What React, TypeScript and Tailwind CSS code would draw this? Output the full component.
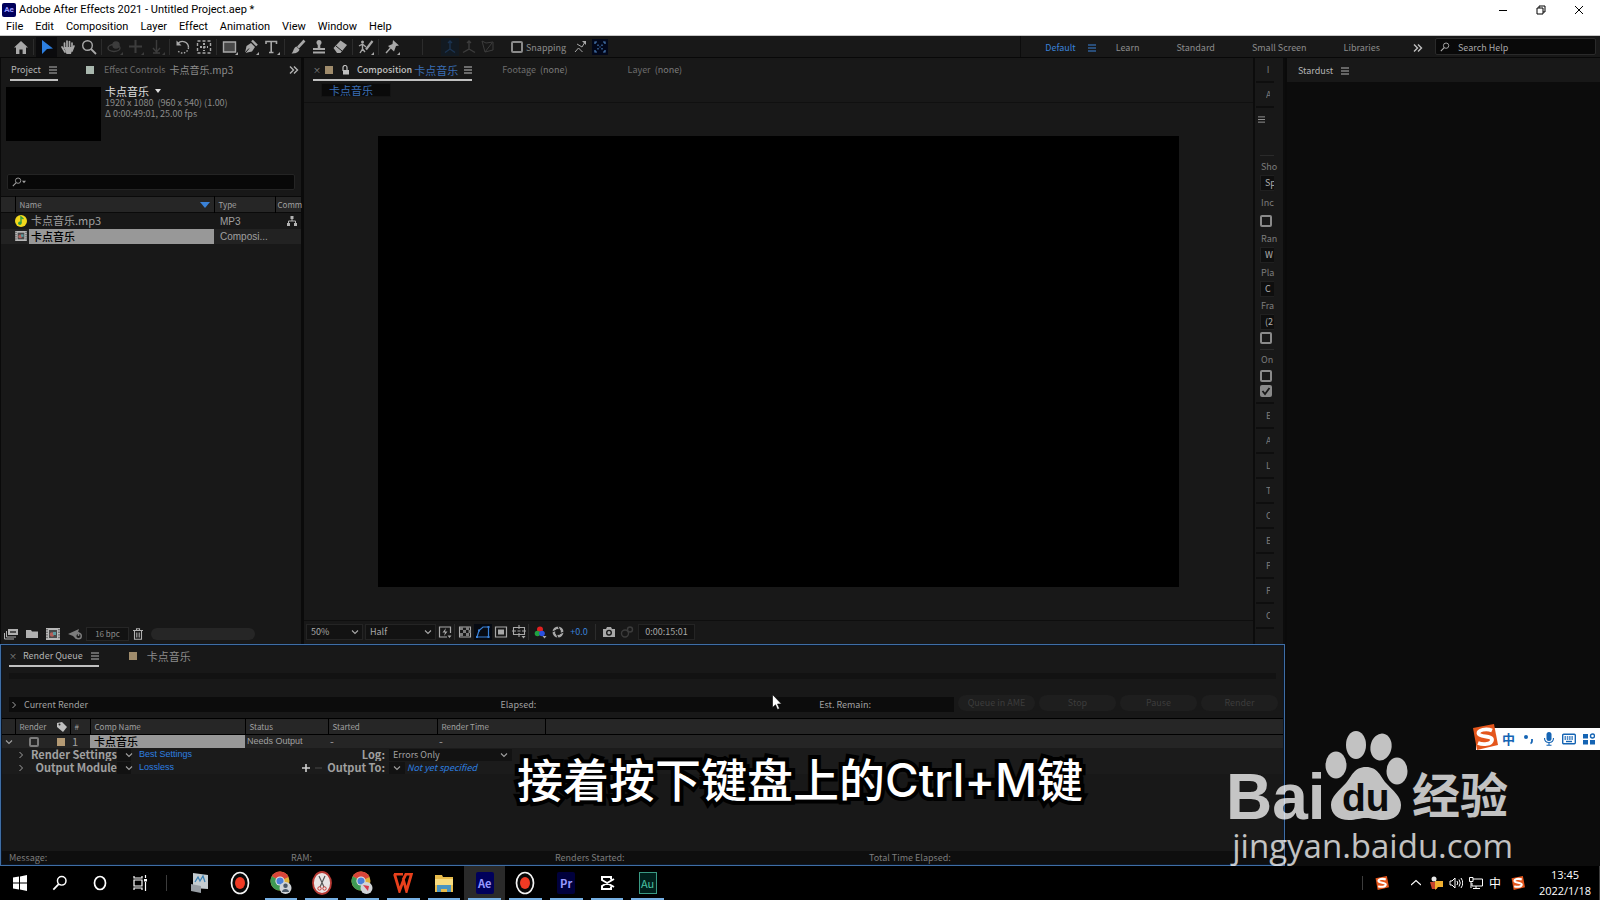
import type { ReactNode } from "react";

interface IconProps {
  children: ReactNode;
  className?: string;
  box?: string;
}

// Shared wrapper for the line icons, strokes use the text color
function Icon({ children, className = "w-4 h-4", box = "0 0 16 16" }: IconProps) {
  return (
    <svg
      viewBox={box}
      className={`shrink-0 ${className}`}
      fill="none"
      stroke="currentColor"
      strokeWidth="1.4"
      aria-hidden="true"
    >
      {children}
    </svg>
  );
}

function Corner() {
  return <path d="M16 13v3h-3z" fill="currentColor" stroke="none" />;
}

function Burger({ className = "w-2 h-2" }: { className?: string }) {
  return (
    <Icon className={className} box="0 0 8 8">
      <path d="M0 1h8M0 4h8M0 7h8" strokeWidth="1" />
    </Icon>
  );
}

function Chevron({ className = "w-2 h-2" }: { className?: string }) {
  return (
    <Icon className={className} box="0 0 8 8">
      <path d="M1 2.5l3 3 3-3" strokeWidth="1.1" />
    </Icon>
  );
}

interface ToolButtonProps {
  label: string;
  active?: boolean;
  dim?: boolean;
  children: ReactNode;
}

function ToolButton({ label, active, dim, children }: ToolButtonProps) {
  return (
    <button
      aria-label={label}
      className={`flex h-5 w-[21px] items-center justify-center ${
        active ? "bg-[#0b0b0d] text-[#2d7fe0]" : dim ? "text-[#3c3c3c]" : "text-[#a8a8a8]"
      }`}
    >
      <Icon>{children}</Icon>
    </button>
  );
}

function Separator() {
  return <span className="mx-0.5 h-4 w-px bg-[#2c2c2c]" />;
}

function CheckBox({ label, checked }: { label: string; checked?: boolean }) {
  return (
    <input
      type="checkbox"
      aria-label={label}
      defaultChecked={checked}
      className="block h-3 w-3 shrink-0 appearance-none rounded-xs border-2 border-[#8a8a8a]"
    />
  );
}

function SearchGlyph({ className = "w-3 h-3" }: { className?: string }) {
  return (
    <Icon className={className} box="0 0 12 12">
      <circle cx="7.3" cy="4.4" r="3.2" strokeWidth="1.1" />
      <path d="M5 6.8L1 11" strokeWidth="1.3" />
    </Icon>
  );
}

function CompIcon({ className = "w-3.5 h-3" }: { className?: string }) {
  return (
    <svg viewBox="0 0 14 12" className={`shrink-0 ${className}`} aria-hidden="true">
      <path d="M0 0h14v12H0z" fill="#b8b8b8" />
      <path d="M1 1v10M13 1v10" stroke="#333" strokeDasharray="1.4 1.2" />
      <path d="M3 2h8v8H3z" fill="#4a4a4a" />
      <circle cx="6" cy="6.5" r="2.2" fill="#b4605a" />
      <path d="M7 4h3v3H7z" fill="#5b9aa0" />
    </svg>
  );
}

const menus = ["File", "Edit", "Composition", "Layer", "Effect", "Animation", "View", "Window", "Help"];

function TitleBar() {
  return (
    <header className="border-b border-[#c8c8c8] bg-white font-['Roboto',sans-serif] text-black">
      <div className="flex h-[18px] items-center pt-0.5 pr-3 pl-0.5">
        <span className="flex h-3.5 w-3.5 items-center justify-center rounded-xs bg-[#00005b] text-[8px] font-bold text-[#9999ff]">Ae</span>
        <h1 className="ml-[3px] flex-1 text-[11px] leading-4">Adobe After Effects 2021 - Untitled Project.aep *</h1>
        <div className="flex items-center gap-7">
          <button aria-label="Minimize">
            <Icon className="h-2.5 w-2.5" box="0 0 10 10"><path d="M1 5.5h8" strokeWidth="1" /></Icon>
          </button>
          <button aria-label="Restore">
            <Icon className="h-2.5 w-2.5" box="0 0 10 10"><path d="M1 3h6v6H1zM3 3V1h6v6H7" strokeWidth="1" /></Icon>
          </button>
          <button aria-label="Close" className="mr-1">
            <Icon className="h-2.5 w-2.5" box="0 0 10 10"><path d="M1 1l8 8M9 1l-8 8" strokeWidth="1" /></Icon>
          </button>
        </div>
      </div>
      <nav className="flex h-[17px] items-center gap-3 pl-1.5">
        {menus.map((m) => (
          <button key={m} className="text-[11px] leading-4">{m}</button>
        ))}
      </nav>
    </header>
  );
}

function Toolbar() {
  return (
    <div className="flex h-[22px] items-center border-b border-[#080808] bg-[#181818] pl-2.5 text-[9px] text-[#8c8c8c]">
      <ToolButton label="Home">
        <path d="M1 8.5L8 2l7 6.5h-2V15H9.6v-4.5H6.4V15H3V8.5z" fill="currentColor" stroke="none" />
      </ToolButton>
      <Separator />
      <ToolButton label="Selection" active>
        <path d="M3 1l11 8.5-6 .5-5 5z" fill="currentColor" stroke="none" />
      </ToolButton>
      <ToolButton label="Hand">
        <path d="M4.5 9V4M7 8V2M9.5 8V2.5M12 9V4M2 8l3 5M14 7l-2 5" strokeWidth="1.7" strokeLinecap="round" />
        <path d="M4 8h8.8L11 15H6.5z" fill="currentColor" stroke="none" />
      </ToolButton>
      <ToolButton label="Zoom">
        <circle cx="6.5" cy="6.5" r="4.8" />
        <path d="M10 10l5 5" strokeWidth="1.8" />
      </ToolButton>
      <Separator />
      <ToolButton label="Orbit camera" dim>
        <ellipse cx="7" cy="9" rx="6" ry="3.5" />
        <circle cx="9" cy="6" r="3" fill="currentColor" />
        <Corner />
      </ToolButton>
      <ToolButton label="Pan camera" dim>
        <path d="M7.5 1v13M1 7.5h13" strokeWidth="2" />
        <Corner />
      </ToolButton>
      <ToolButton label="Dolly camera" dim>
        <path d="M7.5 1v11M4 9l3.5 4L11 9M4 14h7" />
        <Corner />
      </ToolButton>
      <Separator />
      <ToolButton label="Rotate">
        <path d="M3 4.5a6 6 0 0 1 10.5 4" />
        <path d="M13.5 8.5A6 6 0 0 1 3 12" strokeDasharray="1.5 1.5" />
        <path d="M1.5 1.5v5h5z" fill="currentColor" stroke="none" />
      </ToolButton>
      <ToolButton label="Anchor point">
        <path d="M1.5 2h13v12h-13z" strokeDasharray="3 2" />
        <path d="M8 4v8M4 8h8" strokeDasharray="2 1.5" strokeWidth="2" />
      </ToolButton>
      <Separator />
      <ToolButton label="Rectangle">
        <path d="M1.5 3h12v10h-12z" fill="#484848" />
        <Corner />
      </ToolButton>
      <ToolButton label="Pen">
        <path d="M2 14l1.5-7L8 4l4 4-3 4.5z" fill="currentColor" stroke="none" />
        <path d="M9 1.5l5 5" strokeWidth="2.4" />
        <path d="M2 14l4-4.5" stroke="#181818" strokeWidth="1" />
        <Corner />
      </ToolButton>
      <ToolButton label="Type">
        <path d="M2 5V2.5h10.5V5M7.2 2.5v11M5 13.5h4.5" strokeWidth="1.6" />
        <Corner />
      </ToolButton>
      <Separator />
      <ToolButton label="Brush">
        <path d="M14.5 1.5L8 8.5" strokeWidth="2.6" />
        <path d="M6.5 7.5l3 3c-1 3.5-4.5 4-8 4 2-1.5 2-6 5-7z" fill="currentColor" stroke="none" />
      </ToolButton>
      <ToolButton label="Clone stamp">
        <path d="M8 2v8" strokeWidth="2.6" />
        <circle cx="8" cy="3.5" r="2.5" fill="currentColor" stroke="none" />
        <path d="M2 10h12M2 13.5h12" strokeWidth="2" />
      </ToolButton>
      <ToolButton label="Eraser">
        <path d="M1.5 9l7-7.5L15 6l-6.5 8H5z" fill="currentColor" stroke="none" />
        <path d="M4 7l6 5" stroke="#181818" strokeWidth="1" />
      </ToolButton>
      <Separator />
      <ToolButton label="Roto brush">
        <circle cx="4.5" cy="3" r="1.5" fill="currentColor" stroke="none" />
        <path d="M1 7l3.5-2L8 8M4.5 5v5L2 14M4.5 10L7 13" />
        <path d="M14.5 2L8 10.5" strokeWidth="2.2" />
        <Corner />
      </ToolButton>
      <Separator />
      <ToolButton label="Puppet pin">
        <path d="M9 1l6 5.5-3 .5-2 5.5L4 7l4.5-2z" fill="currentColor" stroke="none" />
        <path d="M6.5 9L2 14" />
        <Corner />
      </ToolButton>
      <span className="ml-5 h-4 w-px bg-[#2c2c2c]" />
      <div className="ml-[18px] flex gap-px">
        <button aria-label="Local axis" className="bg-[#121a22] p-px text-[#1b3350]">
          <Icon><path d="M8 2v8l-5 3.5M8 10l5 3.5M6 4l2-2 2 2" /></Icon>
        </button>
        <button aria-label="World axis" className="p-px text-[#3c3c3c]">
          <Icon><path d="M8 2v8l-6 3.5M8 10l6 3.5M6 4l2-2 2 2" /></Icon>
        </button>
        <button aria-label="View axis" className="p-px text-[#3c3c3c]">
          <Icon><path d="M2 2l4 2 7-1v8l-8 2zM5 13l7-9" strokeWidth="1" /></Icon>
        </button>
      </div>
      <span className="ml-1"><Separator /></span>
      <label className="ml-1.5 flex items-center gap-[3px]">
        <CheckBox label="Snapping" />
        <span className="pt-0.5 leading-3">Snapping</span>
      </label>
      <button aria-label="Snap edges" className="ml-2 text-[#a8a8a8]">
        <Icon className="h-3 w-3" box="0 0 12 12">
          <path d="M1 11l3.5-4 4 4M3 3l5 3 3-5" strokeWidth="1" />
          <path d="M8 0h4v4z" fill="currentColor" stroke="none" />
        </Icon>
      </button>
      <button aria-label="Snap grid" className="ml-1.5 flex h-4 w-4 items-center justify-center bg-[#02071a] text-[#4a7db8]">
        <Icon className="h-3 w-3" box="0 0 12 12">
          <path d="M1 3V1h2M9 1h2v2M11 9v2H9M3 11H1V9M4 3.5V5M8 3.5V5M4 7v1.5M8 7v1.5M6 5.5v1" strokeWidth="1.2" />
        </Icon>
      </button>
      <div className="flex-1" />
      <nav className="flex h-full items-center border-l border-[#0c0c0c] pt-0.5 pl-6">
        <button className="text-[#3a82d8]">Default</button>
        <button aria-label="Workspace menu" className="ml-3 text-[#3a82d8]"><Burger /></button>
        <div className="ml-5 flex gap-[37px]">
          <button>Learn</button>
          <button>Standard</button>
          <button>Small Screen</button>
          <button>Libraries</button>
        </div>
        <button aria-label="More workspaces" className="mr-2 ml-[33px] text-[#c0c0c0]">
          <Icon className="h-2.5 w-2.5" box="0 0 10 10"><path d="M1 1.5L4.5 5 1 8.5M5 1.5L8.5 5 5 8.5" /></Icon>
        </button>
      </nav>
      <label className="mr-1 ml-1 flex h-[17px] w-[161px] items-center gap-2 rounded-xs border border-[#2a2a2a] bg-[#090909] pl-1 text-[#b0b0b0]">
        <SearchGlyph className="h-2.5 w-2.5" />
        <input aria-label="Search Help" placeholder="Search Help" className="w-24 bg-transparent pt-0.5 outline-none placeholder:text-[#a8a8a8]" />
      </label>
    </div>
  );
}

function ProjectPanel() {
  return (
    <section className="flex w-[302px] shrink-0 flex-col border-x border-[#0a0a0a] bg-[#181818]">
      <div className="flex h-[23px] items-center pl-[9px] text-[9px] text-[#6c6c6c]">
        <button className="flex h-full items-center gap-2 border-b-2 border-[#c0c0c0] px-px pt-0.5 text-[#b4b4b4]">
          Project <Burger />
        </button>
        <span className="ml-7 h-2 w-2 bg-[#a9b8ae]" />
        <button className="ml-2.5 flex items-center gap-1">
          Effect Controls <span className="text-[10px] text-[#8c8c8c]">卡点音乐.mp3</span>
        </button>
        <button aria-label="More tabs" className="mr-0.5 ml-auto text-[#b4b4b4]">
          <Icon className="h-2.5 w-2.5" box="0 0 10 10"><path d="M1 1.5L4.5 5 1 8.5M5 1.5L8.5 5 5 8.5" /></Icon>
        </button>
      </div>
      <div className="mt-1 flex gap-1 pl-[5px]">
        <div className="mt-0.5 h-[54px] w-[95px] bg-black" />
        <div className="text-[9px] leading-[11px] text-[#8c8c8c]">
          <button className="flex items-center gap-1.5 text-[11px] leading-3 text-[#e0e0e0]">
            卡点音乐
            <Icon className="h-1.5 w-1.5" box="0 0 6 6"><path d="M0 1h6L3 5z" fill="currentColor" stroke="none" /></Icon>
          </button>
          <p>1920 x 1080 &nbsp;(960 x 540) (1.00)</p>
          <p>Δ 0:00:49:01, 25.00 fps</p>
        </div>
      </div>
      <label className="mx-1.5 mt-[33px] flex h-4 items-center rounded-xs border border-[#242424] bg-[#080808] pl-1 text-[#a0a0a0]">
        <SearchGlyph className="h-2.5 w-2.5" />
        <Icon className="h-1 w-1" box="0 0 6 6"><path d="M0 1h6L3 5z" fill="currentColor" stroke="none" /></Icon>
        <input aria-label="Search project" className="w-60 bg-transparent text-[11px] outline-none" />
      </label>
      <table className="mt-1.5 w-full table-fixed border-collapse text-left text-[11px]">
        <thead>
          <tr className="h-4 border-y border-[#0a0a0a] bg-[#262626] text-[8px] leading-3 text-[#a0a0a0]">
            <th className="w-[14px]" />
            <th className="w-[199px] border-l border-black pr-1 pl-1 font-normal">
              <span className="flex items-center justify-between">
                Name
                <Icon className="h-1.5 w-2.5 text-[#3a82d8]" box="0 0 10 6"><path d="M0 0h10L5 6z" fill="currentColor" stroke="none" /></Icon>
              </span>
            </th>
            <th className="w-[61px] border-l border-black pl-1 font-normal">Type</th>
            <th className="border-l border-black pl-0.5 font-normal">Comm</th>
          </tr>
        </thead>
        <tbody className="text-[#a0a0a0]">
          <tr className="h-4">
            <td />
            <td>
              <span className="flex items-center gap-1 leading-[15px]">
                <Icon className="h-3 w-3" box="0 0 12 12">
                  <circle cx="6" cy="6" r="6" fill="#f2d81c" stroke="none" />
                  <path d="M6 8V2l2.5 2" stroke="#2f9a44" />
                  <circle cx="4.8" cy="8.3" r="1.7" fill="#2f9a44" stroke="none" />
                </Icon>
                卡点音乐.mp3
              </span>
            </td>
            <td className="pt-0.5 pl-1.5 font-['Liberation_Sans',sans-serif] text-[10px] leading-3">MP3</td>
            <td className="pl-3">
              <Icon className="h-2.5 w-2.5 text-[#b4b4b4]" box="0 0 10 10">
                <path d="M3.5 0h3v3h-3zM0 7h3v3H0zM7 7h3v3H7z" fill="currentColor" stroke="none" />
                <path d="M5 3v2M1.5 7V5h7v2" strokeWidth="1" />
              </Icon>
            </td>
          </tr>
          <tr className="h-[15px] bg-[#222]">
            <td />
            <td>
              <span className="flex items-center">
                <CompIcon className="h-2.5 w-3" />
                <span className="ml-0.5 flex-1 bg-[#989898] pl-0.5 leading-[15px] font-medium text-black">卡点音乐</span>
              </span>
            </td>
            <td className="pt-0.5 pl-1.5 font-['Liberation_Sans',sans-serif] text-[10px] leading-3">Composi...</td>
            <td />
          </tr>
        </tbody>
      </table>
      <div className="mt-auto flex h-5 items-center text-[#b0b0b0]">
        <button aria-label="Interpret footage" className="ml-[3px]">
          <Icon className="h-3 w-3.5" box="0 0 14 12">
            <path d="M4 1h10v6H4z" fill="currentColor" stroke="none" />
            <path d="M2.5 3v6H12M.5 5v6H10" strokeWidth="1" />
            <path d="M6 4h6" stroke="#222" />
          </Icon>
        </button>
        <button aria-label="New folder" className="ml-2">
          <Icon className="h-3 w-3" box="0 0 12 12"><path d="M0 2h5l1 1.5h6V10H0z" fill="currentColor" stroke="none" /></Icon>
        </button>
        <button aria-label="New composition" className="ml-2"><CompIcon /></button>
        <button aria-label="Project settings" className="ml-2 text-[#7c7c7c]">
          <Icon className="h-3 w-3.5" box="0 0 14 12">
            <path d="M0 6l11-5-3 10-3-3z" fill="currentColor" stroke="none" />
            <circle cx="10.5" cy="8" r="2.8" fill="#181818" />
            <path d="M10.5 4v4" />
          </Icon>
        </button>
        <button className="ml-1 h-3.5 w-[43px] border border-[#262626] bg-[#121212] text-[8px] leading-3 text-[#8c8c8c]">16 bpc</button>
        <button aria-label="Delete" className="ml-1">
          <Icon className="h-3 w-2.5" box="0 0 10 12">
            <path d="M0 2.5h10M3.5 2V.7h3V2M1.5 3v8.3h7V3M3.8 4.5v5M6.2 4.5v5" strokeWidth="1.1" />
          </Icon>
        </button>
        <span className="ml-2 h-3 w-[104px] rounded-full bg-[#262626]" />
      </div>
    </section>
  );
}

function FooterButton({ label, active, children }: { label: string; active?: boolean; children: ReactNode }) {
  return (
    <button aria-label={label} className={`flex h-4 w-[18px] items-center justify-center ${active ? "bg-[#060a12] text-[#3a82d8]" : ""}`}>
      <Icon className="h-3.5 w-3.5" box="0 0 14 14">{children}</Icon>
    </button>
  );
}

function CompositionPanel() {
  return (
    <section className="ml-0.5 flex min-w-0 flex-1 flex-col bg-[#181818]">
      <div className="flex h-[23px] items-center pl-[9px] text-[9px] text-[#6c6c6c]">
        <div className="flex h-full items-center border-b-2 border-[#c0c0c0] pt-0.5 text-[#c0c0c0]">
          <button aria-label="Close tab" className="w-1.5 text-[8px] text-[#8c8c8c]">×</button>
          <span className="ml-1.5 h-2 w-2 bg-[#a08c6c]" />
          <Icon className="ml-2 h-2.5 w-2.5" box="0 0 10 10">
            <path d="M2 5h6v4.5H2z" fill="currentColor" stroke="none" />
            <path d="M2 6V2.5a2 2 0 0 1 4 0V5" strokeWidth="1.2" />
          </Icon>
          <span className="ml-1.5 font-medium">Composition</span>
          <span className="ml-0.5 text-[11px] leading-4 text-[#3a6eb4]">卡点音乐</span>
          <button aria-label="Panel menu" className="ml-1.5"><Burger /></button>
        </div>
        <button className="ml-[30px]">Footage &nbsp;<span className="text-[#7c7c7c]">(none)</span></button>
        <button className="ml-[60px]">Layer &nbsp;<span className="text-[#7c7c7c]">(none)</span></button>
      </div>
      <div className="h-[22px] border-b border-[#101010] pt-0.5 pl-[17px]">
        <button className="block h-3.5 w-[70px] border border-[#141414] bg-[#0a0a0a] pr-2.5 text-[11px] leading-3 text-[#3a6eb4]">卡点音乐</button>
      </div>
      <div className="flex flex-1 items-center px-[74px]">
        <div className="aspect-video w-full bg-black" />
      </div>
      <div className="flex h-6 items-center border-t border-[#0e0e0e] pb-0.5 pl-0.5 text-[9px] text-[#a8a8a8]">
        <label className="relative">
          <select aria-label="Magnification" className="block h-4 w-[57px] appearance-none border border-[#242424] bg-[#121212] pl-1 leading-3">
            <option>50%</option>
          </select>
          <Chevron className="pointer-events-none absolute top-1 right-1 h-2 w-2" />
        </label>
        <label className="relative ml-0.5">
          <select aria-label="Resolution" className="block h-4 w-[71px] appearance-none border border-[#242424] bg-[#121212] pl-1 leading-3">
            <option>Half</option>
          </select>
          <Chevron className="pointer-events-none absolute top-1 right-1 h-2 w-2" />
        </label>
        <FooterButton label="Fast previews">
          <path d="M12.5 8V2h-11v10H9" strokeWidth="1.2" />
          <path d="M8 3L4.5 7.5H7L6 11l3.5-4.5H7zM9.5 10.5h4l-2 2.5z" fill="currentColor" stroke="none" />
        </FooterButton>
        <span className="mr-px h-4 w-px bg-[#2c2c2c]" />
        <FooterButton label="Transparency grid">
          <path d="M1.5 2h11v10h-11z" strokeWidth="1.1" />
          <path d="M2 2h3v3H2zM8 2h3v3H8zM5 5h3v3H5zM10.5 5h2v3h-2zM2 8h3v3H2zM8 8h3v3H8z" fill="#7c7c7c" stroke="none" />
        </FooterButton>
        <FooterButton label="Mask visibility" active>
          <path d="M1 12l2-6.5L7 2h5.500v10z" strokeWidth="1.2" />
          <path d="M0 11h2v2H0zM2 4.500h2v2H2zM11.500 1h2v2h-2zM11.500 11h2v2h-2z" fill="currentColor" stroke="none" />
        </FooterButton>
        <FooterButton label="Region of interest">
          <path d="M1.5 2h11v10h-11z" strokeWidth="1.2" />
          <path d="M4 4.5h6v5H4z" fill="currentColor" stroke="none" />
        </FooterButton>
        <FooterButton label="Guides">
          <path d="M1.5 2.5h11v7h-11zM7 0v4M7 8v4M0 6h4M10 6h4M5.5 6h3" strokeWidth="1.1" />
          <path d="M9.5 11h4l-2 2.5z" fill="currentColor" stroke="none" />
        </FooterButton>
        <span className="mr-0.5 h-4 w-px bg-[#2c2c2c]" />
        <FooterButton label="Channels">
          <circle cx="7" cy="4.5" r="3" fill="#e02020" stroke="none" />
          <circle cx="4.5" cy="8.5" r="2.8" fill="#20a040" stroke="none" />
          <circle cx="9" cy="8.5" r="2.8" fill="#2a50e0" stroke="none" />
          <path d="M9.5 11h4l-2 2.5z" fill="currentColor" stroke="none" />
        </FooterButton>
        <FooterButton label="Reset exposure">
          <circle cx="7" cy="7" r="4.2" strokeWidth="2.6" />
          <path d="M7 1l2 5M13 7l-5 2M7 13L5 8M1 7l5-2" stroke="#181818" strokeWidth="1" />
        </FooterButton>
        <button className="w-6 text-[#3a82d8]">+0.0</button>
        <span className="mx-1 h-4 w-px bg-[#2c2c2c]" />
        <FooterButton label="Snapshot">
          <path d="M1 4h3l1-2h4l1 2h3v8H1z" fill="currentColor" stroke="none" />
          <circle cx="7" cy="7.7" r="2.3" stroke="#181818" />
        </FooterButton>
        <span className="text-[#3c3c3c]">
          <FooterButton label="Show snapshot">
            <circle cx="5" cy="8.5" r="3.5" />
            <circle cx="10" cy="4.5" r="2.5" />
          </FooterButton>
        </span>
        <button className="ml-0.5 h-4 w-[57px] border border-[#242424] bg-[#121212] leading-3">0:00:15:01</button>
      </div>
    </section>
  );
}

// Collapsed panel title, only the first few pixels are visible
function Collapsed({ text }: { text: string }) {
  return (
    <button className="flex h-[25px] w-[18px] items-center border-b-2 border-[#0e0e0e] pl-2.5 text-[9px] text-[#7c7c7c]">
      <span className="w-1 overflow-hidden">{text}</span>
    </button>
  );
}

function SideField({ text }: { text: string }) {
  return (
    <div className="ml-1 flex h-4 items-center overflow-hidden border-y border-l border-[#202020] bg-[#0e0e0e] pl-1 text-[9px] leading-3 text-[#b0b0b0]">
      {text}
    </div>
  );
}

function SideLabel({ text }: { text: string }) {
  return <p className="pl-[5px] text-[9px] leading-4 text-[#7c7c7c]">{text}</p>;
}

function SideStrip() {
  return (
    <aside className="w-8 shrink-0 border-x-2 border-[#0c0c0c] bg-[#181818] pl-px">
      <div className="w-[18px]">
        <Collapsed text="I" />
        <Collapsed text="A" />
        <button aria-label="Preview menu" className="mt-2 ml-0.5 block text-[#a0a0a0]"><Burger className="h-[7px] w-[7px]" /></button>
        <hr className="mt-8 ml-1 border-[#2a2a2a]" />
        <div className="pt-[3px]"><SideLabel text="Sho" /></div>
        <SideField text="Sp" />
        <div className="pt-1"><SideLabel text="Inc" /></div>
        <div className="mt-1 ml-1"><CheckBox label="Include video" /></div>
        <div className="pt-1"><SideLabel text="Ran" /></div>
        <SideField text="W" />
        <div className="pt-0.5"><SideLabel text="Pla" /></div>
        <SideField text="C" />
        <div className="pt-px"><SideLabel text="Fra" /></div>
        <SideField text="(2" />
        <div className="mt-0.5 ml-1"><CheckBox label="Full screen" /></div>
        <hr className="mt-[5px] ml-1 border-[#2a2a2a]" />
        <div className="pt-0.5"><SideLabel text="On" /></div>
        <div className="ml-1 pt-0.5"><CheckBox label="If caching" /></div>
        <label className="relative mt-[3px] ml-1 block">
          <input type="checkbox" defaultChecked aria-label="Move time" className="block h-3 w-3 appearance-none rounded-xs bg-[#8a8a8a]" />
          <Icon className="pointer-events-none absolute top-0 left-0 h-3 w-3 text-[#181818]" box="0 0 12 12"><path d="M2.5 6L5 9l4.5-6" strokeWidth="1.8" /></Icon>
        </label>
        <div className="mt-[5px] border-t-2 border-[#0e0e0e]">
          {["E", "A", "L", "T", "C", "E", "P", "P", "C"].map((t, i) => (
            <Collapsed key={i} text={t} />
          ))}
        </div>
      </div>
    </aside>
  );
}

function Expander() {
  return (
    <Icon className="h-2 w-2" box="0 0 8 8"><path d="M2.5 1l3 3-3 3" strokeWidth="1" /></Icon>
  );
}

function RenderQueue() {
  const head = "border-l border-black pl-1 font-normal";
  return (
    <section className="flex min-h-[222px] flex-col border border-[#3f6ea5] bg-[#181818] text-[9px] text-[#a0a0a0] outline-1 -outline-offset-2 outline-[#0b1626]">
      <div className="flex h-[22px] items-center pl-2">
        <div className="flex h-full items-center border-b-2 border-[#c0c0c0] pt-0.5 text-[#b4b4b4]">
          <button aria-label="Close queue" className="w-2 text-[8px] text-[#8c8c8c]">×</button>
          <span className="ml-1.5">Render Queue</span>
          <button aria-label="Queue menu" className="ml-2"><Burger /></button>
        </div>
        <span className="ml-[30px] h-2 w-2 bg-[#a08c6c]" />
        <button className="ml-2.5 text-[11px] text-[#8c8c8c]">卡点音乐</button>
      </div>
      <div className="mx-2 mt-1.5 h-1.5 bg-[#121212]" />
      <div className="mt-3.5 flex items-center gap-1 pr-1.5 pl-2">
        <div className="mt-1 grid h-[15px] flex-1 grid-cols-[14px_477fr_319fr_135fr] items-center bg-[#0c0c0c] pl-px">
          <Expander />
          <span>Current Render</span>
          <span>Elapsed:</span>
          <span>Est. Remain:</span>
        </div>
        {["Queue in AME", "Stop", "Pause", "Render"].map((b) => (
          <button key={b} disabled className="h-4 w-[77px] rounded-full bg-[#1e1e1e] leading-4 text-[#3c3c3c]">{b}</button>
        ))}
      </div>
      <table className="mt-1.5 w-full table-fixed border-collapse text-left">
        <thead>
          <tr className="h-4 border-y border-black bg-[#262626] text-[8px] leading-3">
            <th className="w-[14px]" />
            <th className={`w-[38px] ${head}`}>Render</th>
            <th className="w-[17px] pl-1">
              <Icon className="h-2.5 w-2.5 text-[#c0c0c0]" box="0 0 10 10">
                <path d="M0 1l5-1 5 5-4 5-6-5z" fill="currentColor" stroke="none" />
                <circle cx="2.5" cy="2.5" r="1" fill="#262626" stroke="none" />
              </Icon>
            </th>
            <th className={`w-[20px] ${head}`}>#</th>
            <th className={`w-[155px] ${head}`}>Comp Name</th>
            <th className={`w-[83px] ${head}`}>Status</th>
            <th className={`w-[109px] ${head}`}>Started</th>
            <th className={`w-[108px] ${head}`}>Render Time</th>
            <th className="border-l border-black" />
          </tr>
        </thead>
        <tbody>
          <tr className="h-[13px] bg-[#252525] text-[11px] leading-[13px]">
            <td><Chevron className="ml-1 h-2 w-2" /></td>
            <td className="pl-3.5">
              <input type="checkbox" aria-label="Render item" className="block h-2.5 w-2.5 appearance-none rounded-xs border-2 border-[#7c7c7c]" />
            </td>
            <td><span className="ml-1 block h-2 w-2 bg-[#b49a74]" /></td>
            <td className="pl-0.5">1</td>
            <td className="bg-[#989898] pl-1 font-medium text-black">卡点音乐</td>
            <td className="pl-0.5 font-['Liberation_Sans',sans-serif] text-[9px]">Needs Output</td>
            <td className="pl-0.5">-</td>
            <td className="pl-0.5">-</td>
            <td />
          </tr>
        </tbody>
      </table>
      <div className="grid h-[13px] grid-cols-[116px_14px_170px_84px_auto] items-center bg-[#1b1b1b] leading-[13px]">
        <div className="flex items-center pl-4">
          <Expander />
          <span className="flex-1 text-right text-[11px] font-bold">Render Settings</span>
        </div>
        <button aria-label="Render settings presets" className="flex h-3 items-center bg-[#121212] pl-2"><Chevron className="h-2 w-2" /></button>
        <a href="#" className="pl-2 font-['Liberation_Sans',sans-serif] text-[#2d7fe0]">Best Settings</a>
        <span className="text-right text-[11px] font-bold">Log:</span>
        <label className="relative ml-1 w-[123px]">
          <select aria-label="Log" className="block h-3 w-full appearance-none bg-[#121212] pl-1 leading-3">
            <option>Errors Only</option>
          </select>
          <Chevron className="pointer-events-none absolute top-0.5 right-1 h-2 w-2" />
        </label>
      </div>
      <div className="grid h-[13px] grid-cols-[116px_14px_170px_84px_auto] items-center bg-[#1b1b1b] leading-[13px]">
        <div className="flex items-center pl-4">
          <Expander />
          <span className="flex-1 text-right text-[11px] font-bold">Output Module</span>
        </div>
        <button aria-label="Output module presets" className="flex h-3 items-center bg-[#121212] pl-2"><Chevron className="h-2 w-2" /></button>
        <a href="#" className="pl-2 font-['Liberation_Sans',sans-serif] text-[#2d7fe0]">Lossless</a>
        <div className="flex items-center justify-between">
          <button aria-label="Add output module">
            <Icon className="h-2.5 w-2.5 text-[#d0d0d0]" box="0 0 10 10"><path d="M5 1v8M1 5h8" strokeWidth="1.6" /></Icon>
          </button>
          <Icon className="h-2 w-2 text-[#484848]" box="0 0 8 8"><path d="M0 4h7" strokeWidth="1" /></Icon>
          <span className="text-[11px] font-bold">Output To:</span>
        </div>
        <div className="flex items-center">
          <button aria-label="Output path" className="ml-1 flex h-3 w-4 items-center justify-center bg-[#121212]"><Chevron className="h-2 w-2" /></button>
          <a href="#" className="ml-0.5 text-[#2d7fe0] italic">Not yet specified</a>
        </div>
      </div>
      <footer className="mt-auto grid h-[14px] grid-cols-[282px_264px_314px_auto] bg-[#0e0e0e] pl-2 leading-[14px] text-[#7c7c7c]">
        <span>Message:</span>
        <span>RAM:</span>
        <span>Renders Started:</span>
        <span>Total Time Elapsed:</span>
      </footer>
    </section>
  );
}

function SogouLogo({ className = "h-3.5 w-3.5" }: { className?: string }) {
  return (
    <svg viewBox="0 0 26 26" className={className} aria-hidden="true">
      <path d="M1 4L22 0l4 21L5 26z" fill="#e4561c" />
      <path d="M20 6.5C14 4 6 6 6.5 9.5c.5 4 14 2 13.5 6.5-.5 4.500-9 5-14 3" fill="none" stroke="#fff" strokeWidth="3.8" />
    </svg>
  );
}

function Chrome({ badge }: { badge: ReactNode }) {
  return (
    <svg viewBox="0 0 22 24" className="h-6 w-[22px]" aria-hidden="true">
      <circle cx="10" cy="10" r="9.5" fill="#e0b23a" />
      <path d="M10 10L1.800 5.200A9.500 9.500 0 0 1 18.500 6z" fill="#d8453a" />
      <path d="M10 10L1.800 5.200A9.500 9.500 0 0 0 10 19.500z" fill="#3f9a54" />
      <circle cx="10" cy="10" r="4.6" fill="#e8e8e8" />
      <circle cx="10" cy="10" r="3.6" fill="#4a80d8" />
      <circle cx="15.5" cy="17" r="6" fill="#d0d4d8" />
      {badge}
    </svg>
  );
}

function RecordIcon() {
  return (
    <svg viewBox="0 0 20 24" className="h-6 w-5" aria-hidden="true">
      <ellipse cx="10" cy="12" rx="8.5" ry="10.5" fill="#080808" stroke="#f4f4f4" strokeWidth="1.7" />
      <ellipse cx="10" cy="12" rx="5" ry="6" fill="#f03a24" />
    </svg>
  );
}

const apps: { name: string; open: boolean; active?: boolean; icon: ReactNode }[] = [
  {
    name: "Monitor",
    open: false,
    icon: (
      <svg viewBox="0 0 20 22" className="h-[22px] w-5">
        <path d="M4 1l15 2v14l-15-1z" fill="#c4ccd0" />
        <path d="M2 12l10 2v7l-10-2z" fill="#989ea4" />
        <path d="M6 10l3-5 2 4 3-5 2 6" fill="none" stroke="#3a80b4" strokeWidth="1.3" />
      </svg>
    ),
  },
  { name: "Recorder", open: false, icon: <RecordIcon /> },
  {
    name: "Chrome",
    open: true,
    icon: <Chrome badge={<path d="M12 21c0-4 7-4 7 0zM15.5 12.5a2 2 0 1 1 0 4.500 2 2 0 0 1 0-4.500z" fill="#4a5868" />} />,
  },
  {
    name: "Snip",
    open: true,
    icon: (
      <svg viewBox="0 0 20 24" className="h-6 w-5">
        <ellipse cx="10" cy="12" rx="9" ry="11" fill="#e8e4e4" stroke="#b83a34" strokeWidth="1.8" />
        <path d="M7 5l5 11M13 5L8 16" stroke="#555" strokeWidth="1.2" />
        <circle cx="7.5" cy="17.5" r="1.7" fill="none" stroke="#c83a34" />
        <circle cx="12.5" cy="17.5" r="1.7" fill="none" stroke="#c83a34" />
      </svg>
    ),
  },
  { name: "Chrome profile", open: true, icon: <Chrome badge={<path d="M12 14l6 1-1 5z" fill="#d83a4a" />} /> },
  {
    name: "WPS",
    open: true,
    icon: (
      <svg viewBox="0 0 20 20" className="h-5 w-5">
        <path d="M1 1h9M1.5 1l5 17 4-11 3 11L18.5 1H13l-3 6" fill="none" stroke="#e8401c" strokeWidth="2.8" />
      </svg>
    ),
  },
  {
    name: "Explorer",
    open: true,
    icon: (
      <svg viewBox="0 0 20 20" className="h-5 w-5">
        <path d="M1 2h7l1 2h10v15H1z" fill="#e8bc4c" />
        <path d="M1 6h18v6H1z" fill="#f8dc80" />
        <path d="M3 19v-7h14v7h-4v-3H7v3z" fill="#4a94c0" />
      </svg>
    ),
  },
  {
    name: "After Effects",
    open: true,
    active: true,
    icon: <span className="flex h-[22px] w-[18px] items-center justify-center rounded-xs bg-[#00005b] text-[11px] font-bold text-[#9999ff]">Ae</span>,
  },
  { name: "Recorder window", open: true, icon: <RecordIcon /> },
  {
    name: "Premiere",
    open: true,
    icon: <span className="flex h-[22px] w-[18px] items-center justify-center rounded-xs bg-[#00003c] text-[11px] font-bold text-[#9999ff]">Pr</span>,
  },
  {
    name: "CapCut",
    open: true,
    icon: (
      <svg viewBox="0 0 16 18" className="h-[18px] w-4">
        <path d="M15 5L3 12v3h9v-2.5M15 13L3 6V3h9v2.5" fill="none" stroke="#fff" strokeWidth="2" />
      </svg>
    ),
  },
  {
    name: "Audition",
    open: true,
    icon: <span className="flex h-[22px] w-[18px] items-center justify-center border border-[#3a9a84] bg-[#00201c] text-[11px] text-[#4ac0a4]">Au</span>,
  },
];

function Taskbar() {
  const sys = "flex h-full w-10 items-center justify-center";
  return (
    <footer className="flex h-[34px] items-center bg-black text-white">
      <button aria-label="Start" className={sys}>
        <Icon className="h-4 w-3.5" box="0 0 14 16">
          <path d="M0 2.5l6-1v6H0zM7 1.400L14 0v7.500H7zM0 8.500h6v6l-6-1zM7 8.500h7V16l-7-1.400z" fill="currentColor" stroke="none" />
        </Icon>
      </button>
      <button aria-label="Search" className={sys}><SearchGlyph className="h-4 w-4" /></button>
      <button aria-label="Cortana" className={sys}>
        <Icon className="h-4 w-3.5" box="0 0 14 16"><ellipse cx="7" cy="8" rx="5.5" ry="6.5" strokeWidth="1.7" /></Icon>
      </button>
      <button aria-label="Task view" className={sys}>
        <Icon className="h-4 w-3.5" box="0 0 14 16">
          <path d="M1 5h8v6H1zM1 1v2h8V1M1 15v-2h8v2M12.5 0v3M12.5 7v9" strokeWidth="1.2" />
          <path d="M11 4h3v2.500h-3z" fill="currentColor" stroke="none" />
        </Icon>
      </button>
      <span className="mr-3 ml-1.5 h-4 w-px bg-[#3c3c3c]" />
      <div className="flex h-full w-[489px]">
        {apps.map((a) => (
          <button key={a.name} aria-label={a.name} className={`relative flex flex-1 items-center justify-center ${a.active ? "bg-[#2a2a2a]" : ""}`}>
            {a.icon}
            {a.open && <span className="absolute inset-x-1 bottom-0 h-0.5 bg-[#76b0e4]" />}
          </button>
        ))}
      </div>
      <div className="ml-auto flex h-full items-center gap-1.5">
        <span className="mr-1.5 h-3.5 w-px bg-[#3c3c3c]" />
        <SogouLogo />
        <button aria-label="Hidden icons" className="ml-3.5 flex w-3.5 justify-center">
          <Icon className="h-2.5 w-2.5" box="0 0 10 10"><path d="M0 7l5-4.5L10 7" strokeWidth="1.1" /></Icon>
        </button>
        <Icon className="h-3.5 w-3.5" box="0 0 14 14">
          <circle cx="5" cy="3" r="2.5" fill="#e8e8e8" stroke="none" />
          <path d="M1 6h8l-1 7H3z" fill="#c8442c" stroke="none" />
          <path d="M6 5h8v6H9l-3 3z" fill="#f0b030" stroke="none" />
        </Icon>
        <Icon className="h-3.5 w-3.5" box="0 0 14 14"><path d="M1 5h2l3-3v10L3 9H1zM8 5q1.5 2 0 4M10 3.500q2.500 3.500 0 7M12 2q3.500 5 0 10" strokeWidth="1" /></Icon>
        <Icon className="h-3.5 w-3.5" box="0 0 14 14"><path d="M4 3h9.5v7H3V7M7 10v2.500M4 12.500h7M.5 1.500H4v4H.5zM2 5.500V12" strokeWidth="1" /></Icon>
        <button className="font-['Noto_Sans_CJK_SC',sans-serif] text-[12px] leading-4">中</button>
        <span className="ml-1"><SogouLogo /></span>
        <div className="ml-2 text-center font-['Open_Sans',sans-serif] text-[11px] leading-4">
          <p>13:45</p>
          <p>2022/1/18</p>
        </div>
        <span className="h-full w-[3px] border-r border-[#3c3c3c]" />
      </div>
    </footer>
  );
}

function InputMethodBar() {
  return (
    <div className="absolute right-0 bottom-[150px] flex h-[22px] w-[124px] items-center gap-[7px] bg-white pl-[26px] text-[#1464b4]">
      <span className="absolute -top-1 -left-1"><SogouLogo className="h-[26px] w-[26px]" /></span>
      <button className="font-['Noto_Sans_CJK_SC',sans-serif] text-[13px] leading-4 font-bold">中</button>
      <Icon className="h-3.5 w-3.5" box="0 0 14 14">
        <circle cx="4" cy="5" r="2" fill="currentColor" stroke="none" />
        <path d="M10 7v2q0 2-1.5 2.5" strokeWidth="1.8" />
      </Icon>
      <Icon className="h-3.5 w-3" box="0 0 12 14">
        <rect x="3.5" y="0" width="5" height="9" rx="2.5" fill="currentColor" stroke="none" />
        <path d="M1.5 6q0 4.500 4.500 4.500T10.500 6M6 10.500V13M3.500 13.300h5" strokeWidth="1.1" />
      </Icon>
      <Icon className="h-3 w-3.5" box="0 0 14 12">
        <rect x=".7" y="1.2" width="12.6" height="9.6" rx="1" />
        <path d="M2.5 4h9M2.5 6h9" strokeDasharray="1.5 .8" />
        <path d="M4 8.500h6" />
      </Icon>
      <Icon className="h-3 w-3" box="0 0 12 12">
        <path d="M0 1h5v4.500H0zM0 7h5v4.500H0zM7 7h5v4.500H7z" fill="currentColor" stroke="none" />
        <circle cx="9.5" cy="3" r="2" />
      </Icon>
    </div>
  );
}

function Watermark() {
  return (
    <div className="pointer-events-none absolute right-[87px] bottom-[34px] text-white opacity-75">
      <svg viewBox="0 0 284 92" className="ml-auto block h-[92px] w-[284px]" aria-label="Baidu">
        <text x="-3" y="91" fill="currentColor" fontSize="64" className="font-['Liberation_Sans',sans-serif] font-bold">Bai</text>
        <g fill="currentColor">
          <ellipse cx="107" cy="37" rx="10.5" ry="13.5" />
          <ellipse cx="127" cy="17" rx="10" ry="14" />
          <ellipse cx="152" cy="19" rx="10.5" ry="13.5" transform="rotate(12 152 19)" />
          <ellipse cx="168" cy="43" rx="10.5" ry="13.5" />
          <path d="M137 39c-12 0-14 9-20 16-7 8-15 13-15 22 0 9 7 15 18 15 7 0 11-2 17-2s10 2 17 2c11 0 18-5 18-15 0-9-8-14-15-22-6-7-8-16-20-16z" />
        </g>
        <text x="113" y="83" fill="#0c0c0c" fontSize="39" className="font-['Liberation_Sans',sans-serif] font-bold">du</text>
        <text x="183" y="85" fill="currentColor" fontSize="48" className="font-['Noto_Sans_CJK_SC',sans-serif] font-bold">经验</text>
      </svg>
      <p className="pt-1.5 text-right font-['Open_Sans',sans-serif] text-[33px] leading-10">jingyan.baidu.com</p>
    </div>
  );
}

export default function App() {
  return (
    <div className="relative flex min-h-screen flex-col bg-[#0a0a0a] font-['Noto_Sans_CJK_SC',sans-serif]">
      <TitleBar />
      <Toolbar />
      <main className="flex flex-1">
        <div className="flex min-w-0 flex-1 flex-col">
          <div className="flex flex-1">
            <ProjectPanel />
            <CompositionPanel />
            <SideStrip />
          </div>
          <RenderQueue />
        </div>
        <section className="flex w-[315px] shrink-0 flex-col border-l-2 border-[#0a0a0a] bg-[#0c0c0c]">
          <div className="flex h-6 items-center gap-2 bg-[#181818] pt-px pl-[11px] text-[9px] text-[#b4b4b4]">
            Stardust
            <button aria-label="Stardust menu"><Burger /></button>
          </div>
        </section>
      </main>
      <Taskbar />
      <InputMethodBar />
      <Watermark />

      {/* Caption over the lower third */}
      <p className="pointer-events-none absolute inset-x-0 bottom-[90px] text-center font-['Inter','Noto_Sans_CJK_SC',sans-serif] text-[46px] leading-[60px] font-medium text-white [-webkit-text-stroke:8px_#000] [paint-order:stroke_fill]">
        接着按下键盘上的Ctrl+M键
      </p>

      {/* Mouse pointer */}
      <svg viewBox="0 0 10 16" className="absolute bottom-[190px] left-[772px] h-4 w-2.5" aria-hidden="true">
        <path d="M.5.5v13l3-2.7 2 4.7 2-1-2-4.5h4z" fill="#fff" stroke="#000" strokeWidth=".6" />
      </svg>
    </div>
  );
}
